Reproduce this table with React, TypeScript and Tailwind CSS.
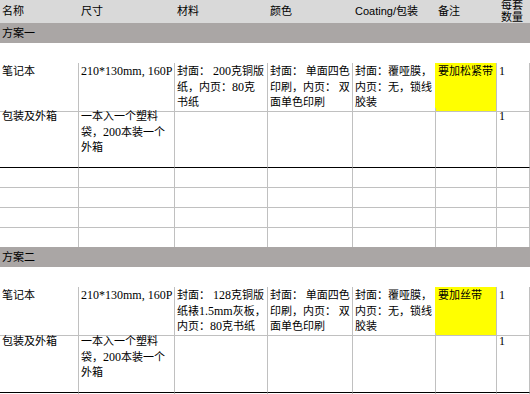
import React from 'react';

type Cell = {
  lines?: string[];
  yellow?: boolean;
};

const grid = 'grid grid-cols-[79px_96px_93px_85px_83px_61px_33px]';
const body = "font-['Liberation_Serif','Noto_Sans_CJK_SC',serif] text-[11px] leading-[15.5px] text-black";
const sans = "font-['Liberation_Sans','Noto_Sans_CJK_SC',sans-serif] text-[11px] text-black";

const headers = ['名称', '尺寸', '材料', '颜色', 'Coating/包装', '备注'];

const plan1: Cell[][] = [
  [
    { lines: ['笔记本'] },
    { lines: ['210*130mm, 160P'] },
    { lines: ['封面： 200克铜版', '纸，内页：80克', '书纸'] },
    { lines: ['封面： 单面四色', '印刷，内页： 双', '面单色印刷'] },
    { lines: ['封面：覆哑膜，', '内页：无，锁线', '胶装'] },
    { lines: ['要加松紧带'], yellow: true },
    { lines: ['1'] },
  ],
  [
    { lines: ['包装及外箱'] },
    { lines: ['一本入一个塑料', '袋，200本装一个', '外箱'] },
    {},
    {},
    {},
    {},
    { lines: ['1'] },
  ],
];

const plan2: Cell[][] = [
  [
    { lines: ['笔记本'] },
    { lines: ['210*130mm, 160P'] },
    { lines: ['封面： 128克铜版', '纸裱1.5mm灰板，', '内页：80克书纸'] },
    { lines: ['封面： 单面四色', '印刷，内页： 双', '面单色印刷'] },
    { lines: ['封面：覆哑膜，', '内页：无，锁线', '胶装'] },
    { lines: ['要加丝带'], yellow: true },
    { lines: ['1'] },
  ],
  plan1[1],
];

// latin runs print a touch larger than the CJK text, like Times next to SimSun
const Mixed: React.FC<{ text: string }> = ({ text }) => (
  <>
    {text.split(/([\x20-\x7e]+)/).map((part, i) =>
      /^[\x20-\x7e]+$/.test(part) && part.trim() ? (
        <span key={i} className="text-[12px]">
          {part}
        </span>
      ) : (
        <React.Fragment key={i}>{part}</React.Fragment>
      )
    )}
  </>
);

const DataRow: React.FC<{ cells: Cell[]; height: string; last?: boolean }> = ({ cells, height, last }) => (
  <div className={`${grid} ${height} ${body}`}>
    {cells.map((c, i) => {
      const nextYellow = cells[i + 1]?.yellow;
      return (
        <div
          key={i}
          className={`border-r border-b px-[2px] pt-px ${
            last ? 'border-b-black' : 'border-b-[#c0c0c0]'
          } ${nextYellow ? 'border-r-[#ffff00]' : 'border-r-[#c0c0c0]'} ${
            c.yellow ? 'bg-[#ffff00]' : ''
          }`}
        >
          {c.lines?.map((l, j) => (
            <div key={j} className="whitespace-pre">
              <Mixed text={l} />
            </div>
          ))}
        </div>
      );
    })}
  </div>
);

const EmptyRow: React.FC<{ height: string; noBottom?: boolean }> = ({ height, noBottom }) => (
  <div className={`${grid} ${height}`}>
    {Array.from({ length: 7 }).map((_, i) => (
      <div
        key={i}
        className={`border-r border-r-[#c0c0c0] ${noBottom ? '' : 'border-b border-b-[#c0c0c0]'}`}
      />
    ))}
  </div>
);

const Section: React.FC<{ title: string }> = ({ title }) => (
  <div className={`h-[20px] bg-[#aaa6a5] flex items-center px-[2px] ${sans}`}>{title}</div>
);

export default function App() {
  return (
    <div className="w-[530px] h-[394px] overflow-hidden bg-white">
      {/* Header */}
      <div className={`${grid} h-[23px] bg-[#d9d9d9] ${sans}`}>
        {headers.map((h) => (
          <div key={h} className="flex items-center px-[2px] whitespace-nowrap">
            {h}
          </div>
        ))}
        <div className="flex items-center pl-[4px] leading-[11.5px]">
          <div>
            每套
            <br />
            数量
          </div>
        </div>
      </div>

      {/* 方案一 */}
      <Section title="方案一" />
      <div className="h-[20px]" />
      <DataRow cells={plan1[0]} height="h-[45px]" />
      <DataRow cells={plan1[1]} height="h-[60px]" last />
      <EmptyRow height="h-[20px]" />
      <EmptyRow height="h-[20px]" />
      <EmptyRow height="h-[20px]" />
      <EmptyRow height="h-[19px]" noBottom />

      {/* 方案二 */}
      <Section title="方案二" />
      <div className="h-[20px]" />
      <DataRow cells={plan2[0]} height="h-[46px]" />
      <DataRow cells={plan2[1]} height="h-[60px]" last />
      <EmptyRow height="h-[20px]" noBottom />
    </div>
  );
}
